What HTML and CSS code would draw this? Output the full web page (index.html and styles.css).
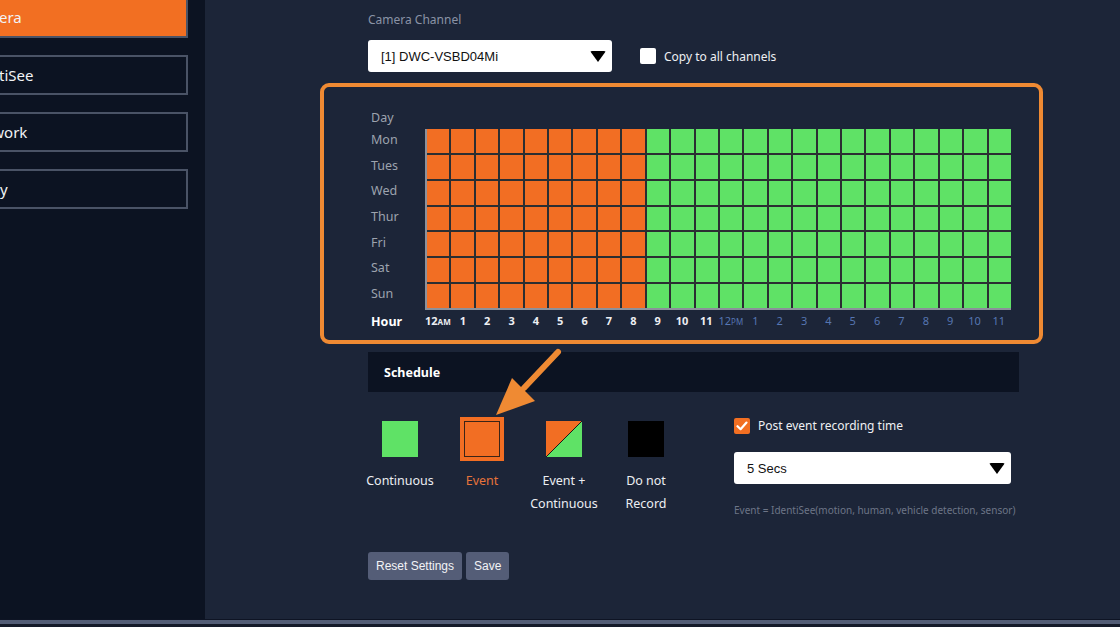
FILE: index.html
```html
<!DOCTYPE html>
<html lang="en">
<head>
    <meta charset="UTF-8">
    <meta name="viewport" content="width=device-width, initial-scale=1.0">
    <title>Recording Schedule</title>
    <link rel="stylesheet" href="styles.css">
</head>
<body>
    <div class="app">
        <div class="sidebar">
            <div class="nav-item active">Camera</div>
            <div class="nav-item">IdentiSee</div>
            <div class="nav-item">Network</div>
            <div class="nav-item">Policy</div>
        </div>

        <div class="main">
            <div class="content">
                <div class="field-label">Camera Channel</div>
                <div class="channel-row">
                    <div class="select channel-select">
                        <span>[1] DWC-VSBD04Mi</span>
                        <span class="caret"></span>
                    </div>
                    <label class="check">
                        <span class="box"></span>
                        Copy to all channels
                    </label>
                </div>

                <!-- schedule table, highlighted -->
                <div class="highlight">
                    <div class="table">
                        <div class="day-head">Day</div>
                        <div class="head-spacer"></div>
                        <div class="days">
                            <span>Mon</span>
                            <span>Tues</span>
                            <span>Wed</span>
                            <span>Thur</span>
                            <span>Fri</span>
                            <span>Sat</span>
                            <span>Sun</span>
                        </div>
                        <div class="grid" id="grid"></div>
                        <div class="hour-head">Hour</div>
                        <div class="hours" id="hours"></div>
                    </div>
                </div>

                <div class="section-head">Schedule</div>

                <div class="options">
                    <div class="legend">
                        <div class="legend-item">
                            <div class="swatch continuous"></div>
                            <div class="legend-label">Continuous</div>
                        </div>
                        <div class="legend-item">
                            <div class="swatch event selected"></div>
                            <div class="legend-label orange-text">Event</div>
                        </div>
                        <div class="legend-item">
                            <div class="swatch both"></div>
                            <div class="legend-label">Event +<br>Continuous</div>
                        </div>
                        <div class="legend-item">
                            <div class="swatch none"></div>
                            <div class="legend-label">Do not<br>Record</div>
                        </div>
                    </div>

                    <div class="post-event">
                        <label class="check">
                            <span class="box checked">
                                <svg width="12" height="10" viewBox="0 0 12 10"><path d="M1.5 5.2 L4.6 8.2 L10.5 1.6" fill="none" stroke="#fff" stroke-width="2.2" stroke-linecap="round" stroke-linejoin="round"/></svg>
                            </span>
                            Post event recording time
                        </label>
                        <div class="select post-select">
                            <span>5 Secs</span>
                            <span class="caret"></span>
                        </div>
                        <div class="hint">Event = IdentiSee(motion, human, vehicle detection, sensor)</div>
                    </div>
                </div>

                <div class="buttons">
                    <button>Reset Settings</button>
                    <button>Save</button>
                </div>

                <svg class="pointer" width="75" height="72" viewBox="0 0 75 72">
                    <line x1="68" y1="4" x2="34" y2="40" stroke="#ef8a33" stroke-width="6" stroke-linecap="round"/>
                    <polygon points="6,67 22,30 45,53" fill="#ef8a33"/>
                </svg>
            </div>
        </div>
    </div>
    <div class="footer"></div>

    <script>
    document.addEventListener("DOMContentLoaded", function() {
        const grid = document.getElementById("grid");
        const hours = document.getElementById("hours");

        // 9 hours of event recording each day, the rest continuous
        for (let day = 0; day < 7; day++) {
            for (let h = 0; h < 24; h++) {
                const cell = document.createElement("div");
                cell.className = h < 9 ? "cell event" : "cell continuous";
                grid.appendChild(cell);
            }
        }

        for (let h = 0; h < 24; h++) {
            const label = document.createElement("span");
            const num = h % 12 === 0 ? 12 : h % 12;
            label.className = h < 12 ? "am" : "pm";
            label.textContent = num;
            if (h % 12 === 0) {
                const small = document.createElement("small");
                small.textContent = h < 12 ? "AM" : "PM";
                label.appendChild(small);
            }
            hours.appendChild(label);
        }
    });
    </script>
</body>
</html>
```

FILE: styles.css
```css
body {
    margin: 0;
    height: 627px;
    overflow: hidden;
    font-family: "Noto Sans", "Open Sans", sans-serif;
    background-color: #141a29;
    color: #e8eaee;
}

.app {
    display: flex;
    height: 619px;
    background-color: #1c2538;
}

.sidebar {
    width: 252px;
    margin-left: -47px;
    flex: none;
    background-color: #0c1322;
}

.nav-item {
    height: 40px;
    box-sizing: border-box;
    margin: 0 17px 17px 0;
    padding-left: 14px;
    border: 2px solid #4a5366;
    border-left: none;
    display: flex;
    align-items: center;
    font-size: 15px;
    color: #f2f3f5;
}

.nav-item.active {
    margin-top: -2px;
    background-color: #f26f22;
    border-top: none;
}

.main {
    flex: 1;
}

.content {
    position: relative;
    width: 651px;
    padding: 12px 0 0 163px;
}

.field-label {
    font-size: 12px;
    line-height: 16px;
    color: #8a93a6;
}

.channel-row {
    display: flex;
    align-items: center;
    margin-top: 12px;
}

.select {
    height: 32px;
    box-sizing: border-box;
    background-color: #fff;
    border-radius: 3px;
    display: flex;
    align-items: center;
    justify-content: space-between;
    padding: 0 6px 0 13px;
    font-family: "Liberation Sans", Arial, sans-serif;
    font-size: 13px;
    color: #111;
}

.channel-select {
    width: 244px;
}

.caret {
    width: 0;
    height: 0;
    border-left: 8px solid transparent;
    border-right: 8px solid transparent;
    border-top: 11px solid #000;
    border-radius: 2px;
}

.check {
    display: flex;
    align-items: center;
    gap: 8px;
    font-size: 12px;
    color: #eef0f3;
}

.channel-row .check {
    margin-left: 28px;
}

.box {
    width: 16px;
    height: 16px;
    background-color: #fff;
    border-radius: 2px;
    display: flex;
    align-items: center;
    justify-content: center;
}

.box.checked {
    background-color: #f26f22;
}

/* orange annotation frame */
.highlight {
    margin: 11px -24px 0 -48px;
    border: 4px solid #ef8a33;
    border-radius: 9px;
    padding: 21px 0 10px 47px;
}

.table {
    display: grid;
    grid-template-columns: 54px 586px;
    grid-template-rows: 21px 181px 20px;
}

.day-head,
.days span {
    font-size: 12.5px;
    color: #9ca3ae;
}

.day-head {
    line-height: 20px;
}

.days {
    display: flex;
    flex-direction: column;
    padding-bottom: 2px;
}

.days span {
    flex: 1;
    display: flex;
    align-items: center;
    margin-top: -4px;
}

.grid {
    display: grid;
    grid-template-columns: repeat(24, 1fr);
    grid-template-rows: repeat(7, 1fr);
    gap: 2px;
    background-color: #2b2e32;
    border-left: 2px solid #8c919b;
    border-bottom: 2px solid #8c919b;
}

.cell.event {
    background-color: #f26e23;
}

.cell.continuous {
    background-color: #5fe266;
}

.hour-head {
    font-size: 12.5px;
    font-weight: bold;
    color: #fff;
    display: flex;
    align-items: center;
    padding-top: 2px;
}

.hours {
    display: grid;
    grid-template-columns: repeat(24, 1fr);
    align-items: center;
    padding-top: 1px;
}

.hours span {
    text-align: center;
    font-size: 11px;
    white-space: nowrap;
}

.hours .am {
    color: #eceef2;
    font-weight: bold;
}

.hours .pm {
    color: #5676b2;
}

.hours small {
    font-size: 8px;
}

.section-head {
    margin-top: 8px;
    height: 40px;
    background-color: #0c1322;
    display: flex;
    align-items: center;
    padding-left: 16px;
    font-size: 12.5px;
    font-weight: bold;
    color: #fff;
}

.options {
    display: flex;
}

.legend {
    width: 366px;
    display: flex;
    gap: 18px;
    padding-top: 29px;
}

.legend-item {
    width: 64px;
    display: flex;
    flex-direction: column;
    align-items: center;
}

.swatch {
    width: 36px;
    height: 36px;
    box-sizing: border-box;
}

.swatch.continuous {
    background-color: #5fe266;
}

.swatch.event {
    background-color: #f26e23;
}

.swatch.selected {
    border: 1px solid #3b2417;
    box-shadow: 0 0 0 4px #f26e23;
}

.swatch.both {
    background: linear-gradient(to bottom right, #f26e23 49.5%, #1a1a1a 49.5%, #1a1a1a 51%, #5fe266 51%);
}

.swatch.none {
    background-color: #000;
}

.legend-label {
    margin-top: 12px;
    font-size: 12.5px;
    line-height: 23px;
    text-align: center;
    white-space: nowrap;
    color: #eceef2;
}

.orange-text {
    color: #e7733a;
}

.post-event {
    width: 277px;
    padding-top: 25px;
}

.post-select {
    margin-top: 18px;
}

.hint {
    margin-top: 19px;
    font-size: 10px;
    line-height: 14px;
    color: #6d7587;
    white-space: nowrap;
}

.buttons {
    display: flex;
    gap: 4px;
    margin-top: 35px;
}

button {
    height: 28px;
    padding: 0 8px;
    background-color: #545d77;
    color: #f2f3f6;
    border: none;
    border-radius: 3px;
    font-family: "Liberation Sans", Arial, sans-serif;
    font-size: 12px;
}

.pointer {
    position: absolute;
    left: 285px;
    top: 348px;
}

.footer {
    height: 4px;
    border-top: 1px solid #0e1424;
    background-color: #535d76;
}
```
